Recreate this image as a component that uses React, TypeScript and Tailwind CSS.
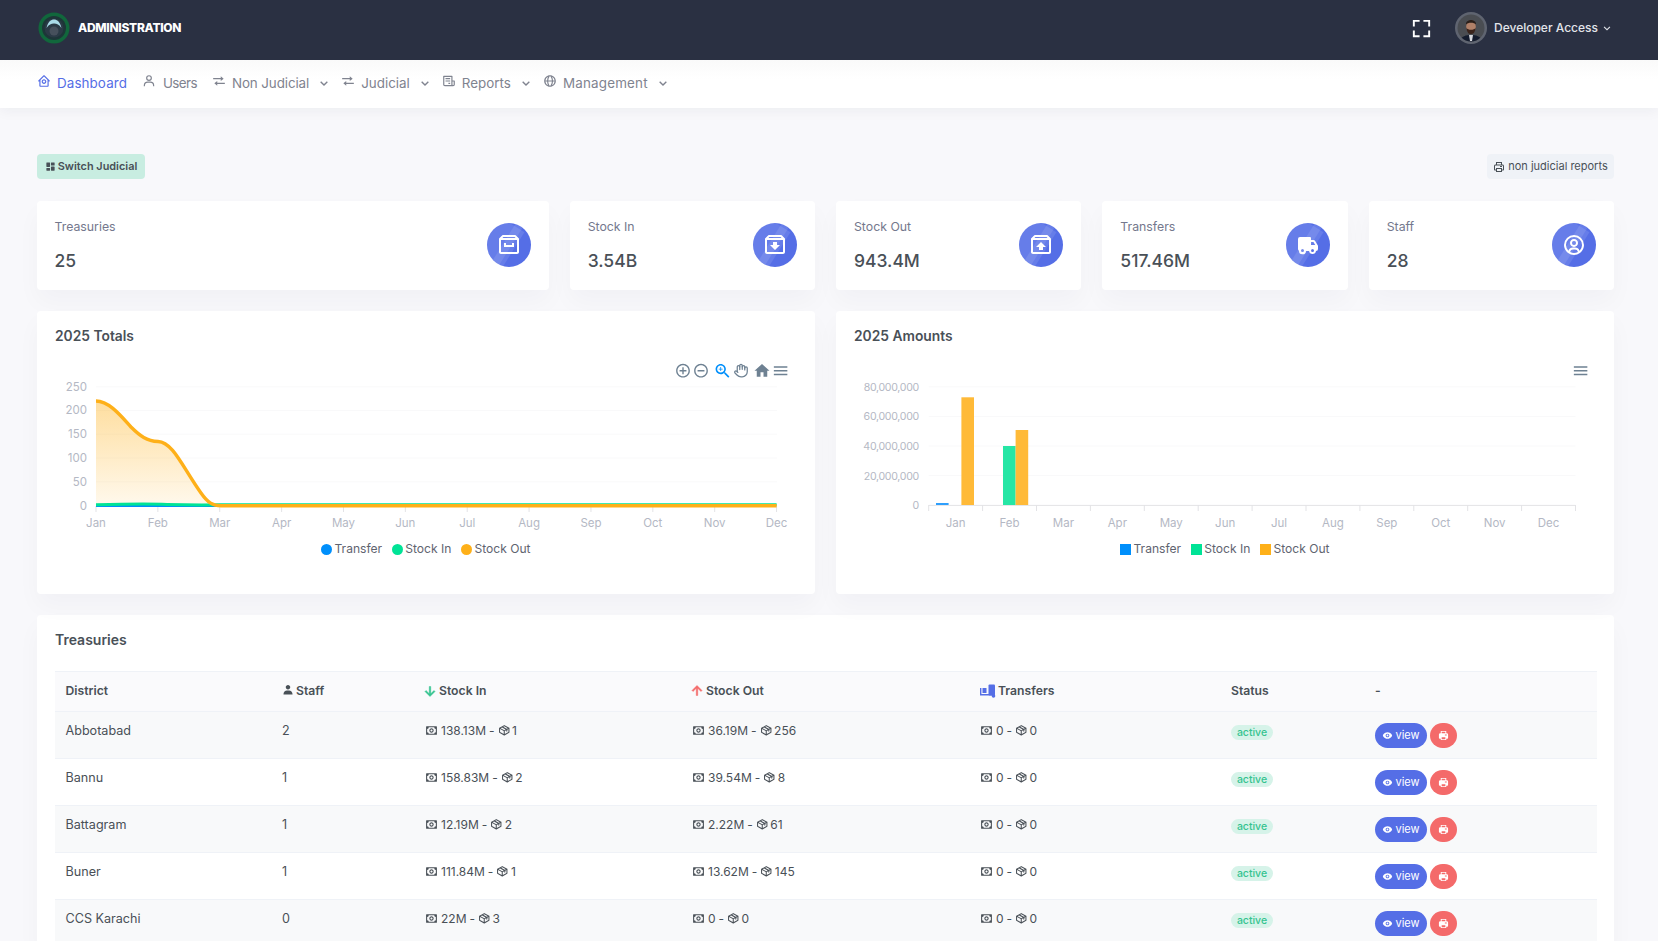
import React from "react";
import {
  BiHomeCircle, BiUser, BiTransfer, BiReceipt, BiGlobe, BiChevronDown, BiFullscreen,
  BiArchive, BiArchiveIn, BiArchiveOut, BiSolidTruck, BiUserCircle, BiPrinter, BiMoney,
  BiPackage, BiSolidShow, BiSolidPrinter, BiSolidDashboard, BiSolidUser, BiDownArrowAlt, BiUpArrowAlt,
} from "react-icons/bi";

const months = ["Jan", "Feb", "Mar", "Apr", "May", "Jun", "Jul", "Aug", "Sep", "Oct", "Nov", "Dec"];

function Logo() {
  return (
    <svg width="32" height="32" viewBox="0 0 32 32" className="shrink-0">
      <circle cx="16" cy="16" r="15.5" fill="#11673c" />
      <circle cx="16" cy="16" r="12" fill="#1d3638" />
      <circle cx="16" cy="16" r="9.5" fill="#2b3a46" />
      <path d="M8.5 16 C10 9.5 13 7.5 16 7.5 C19 7.5 22 9.5 23.5 16 C21 12.5 19 11.5 16 11.5 C13 11.5 11 12.5 8.5 16Z" fill="#a9dbe8" />
      <circle cx="16" cy="19" r="4.5" fill="#46505c" />
    </svg>
  );
}

function Avatar() {
  return (
    <svg width="32" height="32" viewBox="0 0 32 32" className="shrink-0">
      <circle cx="16" cy="16" r="16" fill="#5f6470" />
      <circle cx="16" cy="16" r="13.5" fill="#4a4d52" />
      <clipPath id="av"><circle cx="16" cy="16" r="13.5" /></clipPath>
      <g clipPath="url(#av)">
        <path d="M4 32 C5 24 11 23 16 23 C21 23 27 24 28 32Z" fill="#141c2e" />
        <path d="M14 23 L18 23 L17 29 L15 29Z" fill="#d5d7dc" />
        <ellipse cx="16" cy="14.5" rx="4.8" ry="6.4" fill="#b08068" />
        <path d="M11.4 16 C12 21 14 22 16 22 C18 22 20 21 20.6 16 C19 18.4 13 18.4 11.4 16Z" fill="#3a241c" />
        <path d="M11 12.5 C10.5 6.5 21.5 6.5 21 12.5 C19 10.2 13 10.2 11 12.5Z" fill="#2a1f1a" />
      </g>
    </svg>
  );
}

function NavItem({ icon, label, active, chevron, tone, gap }: { icon: React.ReactNode; label: string; active?: boolean; chevron?: boolean; tone?: string; gap?: string }) {
  return (
    <div className={active ? "flex items-center text-[#556ee6]" : "flex items-center text-[#7f838f]"}>
      <span className="-translate-y-0.5">{icon}</span>
      <span className={(gap ?? "ml-[6px]") + " text-[13.4px] leading-5 " + (tone ?? "")}>{label}</span>
      {chevron && <BiChevronDown size={16} className="ml-[7px] -mr-[6px]" />}
    </div>
  );
}

function Stat({ label, value, icon, wide }: { label: string; value: string; icon: React.ReactNode; wide?: boolean }) {
  return (
    <div className={(wide ? "col-span-2 pl-[17.5px] " : "pl-[18px] ") + "flex h-[89px] justify-between rounded bg-white pr-[18px] shadow-[0_12px_24px_rgba(18,38,63,0.03)]"}>
      <div className="pt-4">
        <div className="h-5 text-[12.3px] leading-5 text-[#74788d]">{label}</div>
        <div className="mt-3 h-6 text-[17.5px] font-medium leading-6 text-[#495057]">{value}</div>
      </div>
      <div className="relative mt-[22px] flex h-11 w-11 items-center justify-center overflow-hidden rounded-full bg-[#556ee6] text-white">
        <span className="absolute -top-[5px] left-[16px] h-[54px] w-2 rotate-[32deg] bg-white/10" />
        <span className="absolute -top-[5px] -left-3 h-[54px] w-[38px] rotate-[32deg] bg-white/10" />
        {icon}
      </div>
    </div>
  );
}

function Legend({ square }: { square?: boolean }) {
  const items = [
    { label: "Transfer", color: "bg-[#008ffb]" },
    { label: "Stock In", color: "bg-[#00e396]" },
    { label: "Stock Out", color: "bg-[#feb019]" },
  ];
  return (
    <div className="flex h-[18px] items-center justify-center gap-[10px]">
      {items.map((i) => (
        <div key={i.label} className="flex items-center gap-[2px]">
          <span className={i.color + " h-[11px] w-[11px] " + (square ? "" : "rounded-full")} />
          <span className="text-[12.1px] leading-[18px] text-[#5f6470]">{i.label}</span>
        </div>
      ))}
    </div>
  );
}

function Toolbar({ x, y, d, fill = "#6e8192", size = 20 }: { x: number; y: number; d: string; fill?: string; size?: number }) {
  return (
    <svg x={x - size / 2} y={y - size / 2} width={size} height={size} viewBox="0 0 24 24" fill={fill}>
      <path d={d} />
    </svg>
  );
}

const MENU = "M3 18h18v-2H3v2zm0-5h18v-2H3v2zm0-7v2h18V6H3z";

function AreaChart() {
  const xs = months.map((_, i) => 59 + i * 61.87);
  const ys = [145.6, 121.8, 98, 74.2, 50.4, 26.8];
  const curve = "M59 41 C72 41 84 56 94 67 C103 76 110 81 121 81.5 C136 82 146 108 164 133 C171 143 176 145.8 184 145.8 L739.6 145.8";
  return (
    <svg width="778" height="180" className="block">
      <defs>
        <linearGradient id="areaFill" x1="0" y1="0" x2="0" y2="1">
          <stop offset="0" stopColor="#feb019" stopOpacity="0.42" />
          <stop offset="1" stopColor="#feb019" stopOpacity="0.08" />
        </linearGradient>
      </defs>
      {ys.map((y, i) => (
        <g key={y}>
          <line x1="59" x2="740" y1={y} y2={y} stroke="#f9f9fa" />
          <text x="50" y={y + 4} textAnchor="end" fontSize="11.5" fill="#b4b8c4">{i * 50}</text>
        </g>
      ))}
      {xs.map((x, i) => (
        <g key={i}>
          <line x1={x} x2={x} y1="146" y2="152" stroke="#e3e3e6" />
          <text x={x} y="167" textAnchor="middle" fontSize="11.5" fill="#b4b8c4">{months[i]}</text>
        </g>
      ))}
      <path d={curve + " L59 145.5Z"} fill="url(#areaFill)" />
      <path d="M59 145.5 L184 145.5" stroke="#008ffb" strokeWidth="3" fill="none" />
      <path d="M59 144.8 C90 144 110 143.6 130 144.5 C150 145 170 145 184 144.8 L739.6 144.8" stroke="#00e396" strokeWidth="3" fill="none" />
      <path d={curve} stroke="#feb019" strokeWidth="3.4" fill="none" />
      <Toolbar x={646} y={10.7} size={16.5} d="M13 7h-2v4H7v2h4v4h2v-4h4v-2h-4V7zm-1-5C6.48 2 2 6.48 2 12s4.48 10 10 10 10-4.48 10-10S17.52 2 12 2zm0 18c-4.41 0-8-3.59-8-8s3.59-8 8-8 8 3.59 8 8-3.59 8-8 8z" />
      <Toolbar x={664} y={10.7} size={16.5} d="M7 11v2h10v-2H7zm5-9C6.48 2 2 6.48 2 12s4.48 10 10 10 10-4.48 10-10S17.52 2 12 2zm0 18c-4.41 0-8-3.59-8-8s3.59-8 8-8 8 3.59 8 8-3.59 8-8 8z" />
      <Toolbar x={685.7} y={11} fill="#008ffb" size={19} d="M15.5 14h-.79l-.28-.27C15.41 12.59 16 11.11 16 9.5 16 5.91 13.09 3 9.5 3S3 5.91 3 9.5 5.91 16 9.5 16c1.61 0 3.09-.59 4.23-1.57l.27.28v.79l5 4.99L20.49 19l-4.99-5zm-6 0C7.01 14 5 11.99 5 9.5S7.01 5 9.5 5 14 7.01 14 9.5 11.99 14 9.5 14zM12 10h-2v2H9v-2H7V9h2V7h1v2h2v1z" />
      <svg x={696.5} y={3} width="15" height="15" viewBox="0 0 24 24" fill="none" stroke="#6e8192" strokeWidth="2" strokeLinecap="round" strokeLinejoin="round">
        <path d="M18 11V6a2 2 0 0 0-4 0" /><path d="M14 10V4a2 2 0 0 0-4 0v2" /><path d="M10 10.5V6a2 2 0 0 0-4 0v8" /><path d="M18 8a2 2 0 1 1 4 0v6a8 8 0 0 1-8 8h-2c-2.8 0-4.5-.86-5.99-2.34l-3.6-3.6a2 2 0 0 1 2.83-2.82L7 15" />
      </svg>
      <Toolbar x={725} y={10.7} size={18} d="M10 20v-6h4v6h5v-8h3L12 3 2 12h3v8z" />
      <Toolbar x={743.6} y={10.7} size={18} d={MENU} />
    </svg>
  );
}

function BarChart() {
  const x0 = 92.7;
  const band = 53.9;
  const yl = ["0", "20,000,000", "40,000,000", "60,000,000", "80,000,000"];
  const gy = [145.4, 115.5, 86, 56.4, 26.8];
  return (
    <svg width="778" height="180" className="block">
      {gy.map((y, i) => (
        <g key={y}>
          <line x1={x0} x2={x0 + band * 12} y1={y} y2={y} stroke={i === 0 ? "#e3e3e6" : "#f9f9fa"} />
          <text x="83" y={y + 4} textAnchor="end" fontSize="10.6" letterSpacing="-0.3" fill="#b4b8c4">{yl[i]}</text>
        </g>
      ))}
      {Array.from({ length: 13 }).map((_, i) => (
        <line key={i} x1={x0 + i * band} x2={x0 + i * band} y1="145" y2="151" stroke="#e3e3e6" />
      ))}
      {months.map((m, i) => (
        <text key={m} x={x0 + band * (i + 0.5)} y="167" textAnchor="middle" fontSize="11.5" fill="#b4b8c4">{m}</text>
      ))}
      <rect x="100" y="143" width="12.6" height="2" fill="#2f9ffc" />
      <rect x="125.4" y="37.3" width="12.6" height="107.7" fill="#ffba38" />
      <rect x="167" y="86" width="12.6" height="59" fill="#26e6a5" />
      <rect x="179.6" y="70" width="12.6" height="75" fill="#ffba38" />
      <Toolbar x={744.6} y={10.7} size={18} d={MENU} />
    </svg>
  );
}

function Card({ title, children }: { title: string; children: React.ReactNode }) {
  return (
    <div className="h-[283px] rounded bg-white pt-[15px] shadow-[0_12px_24px_rgba(18,38,63,0.03)]">
      <h4 className="ml-[18px] mb-[14px] h-5 text-[13.8px] font-semibold leading-5 text-[#495057]">{title}</h4>
      {children}
    </div>
  );
}

function Amount({ money, items }: { money: string; items: string }) {
  return (
    <span className="flex items-center text-[12px] leading-5 text-[#495057]">
      <BiMoney size={13} className="mr-[3px] -translate-y-px" />
      {money}
      <span className="mx-[3px]">-</span>
      <BiPackage size={12.5} className="mr-[2px] -translate-y-px" />
      {items}
    </span>
  );
}

function Forklift() {
  return (
    <svg width="17" height="14" viewBox="0 0 17 14" fill="#556ee6">
      <rect x="2.5" y="4" width="4" height="5" />
      <rect x="8.5" y="0.5" width="6.5" height="11" rx="1" />
      <path d="M0 10 H12 V11.5 H0Z" />
      <path d="M0 4 H1.4 V11 H0Z" />
      <circle cx="13.5" cy="12" r="1.8" />
    </svg>
  );
}

const rows = [
  ["Abbotabad", "2", "138.13M", "1", "36.19M", "256"],
  ["Bannu", "1", "158.83M", "2", "39.54M", "8"],
  ["Battagram", "1", "12.19M", "2", "2.22M", "61"],
  ["Buner", "1", "111.84M", "1", "13.62M", "145"],
  ["CCS Karachi", "0", "22M", "3", "0", "0"],
];

export default function App() {
  return (
    <div className="flex h-screen flex-col overflow-hidden bg-[#f8f8fb] font-['Inter','Liberation_Sans',sans-serif]">
      <header className="relative z-20 flex h-[60px] shrink-0 items-center justify-between bg-[#2a3042] pb-[4px] pl-[38px] pr-[44px]">
        <div className="flex items-center">
          <Logo />
          <span className="ml-[8px] text-[12px] font-extrabold tracking-[-0.3px] text-white">ADMINISTRATION</span>
        </div>
        <div className="flex items-center">
          <BiFullscreen size={23} className="text-white" />
          <div className="ml-[22px]"><Avatar /></div>
          <span className="ml-[7px] text-[12px] font-medium text-[#e2e5ea]">Developer Access</span>
          <BiChevronDown size={14} className="ml-[2px] text-[#e2e5ea]" />
        </div>
      </header>

      <nav className="relative z-10 flex h-12 shrink-0 items-center gap-[15px] bg-gradient-to-b from-[#fafafa] to-white to-40% pb-[3px] pl-[37px] shadow-[0_3px_12px_rgba(18,38,63,0.05)]">
        <NavItem active icon={<BiHomeCircle size={14} />} label="Dashboard" tone="tracking-[0.1px]" />
        <NavItem icon={<BiUser size={14} />} label="Users" gap="ml-[7px]" tone="tracking-[-0.6px]" />
        <NavItem icon={<BiTransfer size={14} />} label="Non Judicial" tone="tracking-[-0.1px]" chevron />
        <NavItem icon={<BiTransfer size={14} />} label="Judicial" chevron />
        <NavItem icon={<BiReceipt size={14} />} label="Reports" chevron />
        <NavItem icon={<BiGlobe size={14} />} label="Management" tone="tracking-[0.2px]" chevron />
      </nav>

      <main className="flex-1 pl-[37px] pr-[44px] pt-[46px]">
        <div className="flex h-[25px] justify-between">
          <button className="flex w-[108px] items-center justify-center gap-[2px] rounded bg-[#c8ede1] text-[10.9px] font-semibold text-[#495057]">
            <BiSolidDashboard size={11} />
            Switch Judicial
          </button>
          <button className="flex w-[127px] items-center justify-center gap-[3px] rounded bg-[#eff2f7] text-[11px] text-[#495057]">
            <BiPrinter size={12} />
            non judicial reports
          </button>
        </div>

        <div className="mt-[22px] grid grid-cols-6 gap-x-[21px]">
          <Stat wide label="Treasuries" value="25" icon={<BiArchive size={24} className="relative" />} />
          <Stat label="Stock In" value="3.54B" icon={<BiArchiveIn size={24} className="relative" />} />
          <Stat label="Stock Out" value="943.4M" icon={<BiArchiveOut size={24} className="relative" />} />
          <Stat label="Transfers" value="517.46M" icon={<BiSolidTruck size={24} className="relative" />} />
          <Stat label="Staff" value="28" icon={<BiUserCircle size={24} className="relative" />} />
        </div>

        <div className="mt-[21px] grid grid-cols-2 gap-x-[21px]">
          <Card title="2025 Totals">
            <AreaChart />
            <Legend />
          </Card>
          <Card title="2025 Amounts">
            <BarChart />
            <Legend square />
          </Card>
        </div>

        <div className="mt-[21px] rounded bg-white pl-[18px] pr-[17px] pt-[15px] shadow-[0_12px_24px_rgba(18,38,63,0.03)]">
          <h4 className="mb-[21px] h-5 text-[14px] font-semibold leading-5 text-[#495057]">Treasuries</h4>
          <table className="w-full table-fixed border-collapse text-left text-[12.6px] text-[#495057]">
            <colgroup>
              <col className="w-[217px]" />
              <col className="w-[143px]" />
              <col className="w-[267px]" />
              <col className="w-[288px]" />
              <col className="w-[251px]" />
              <col className="w-[144px]" />
              <col />
            </colgroup>
            <thead>
              <tr className="h-10 border-y border-[#eff2f7] bg-[#fafafc] text-[12.2px] font-semibold">
                <th className="pl-[10.5px] font-semibold">District</th>
                <th className="pl-[10px] font-semibold"><span className="flex items-center gap-[2px]"><BiSolidUser size={12} className="-translate-y-px" />Staff</span></th>
                <th className="pl-[10px] font-semibold"><span className="-ml-[4px] flex items-center"><BiDownArrowAlt size={18} className="stroke-current stroke-[0.6] text-[#34c38f]" />Stock In</span></th>
                <th className="pl-[10px] font-semibold"><span className="-ml-[4px] flex items-center"><BiUpArrowAlt size={18} className="stroke-current stroke-[0.6] text-[#f46a6a]" />Stock Out</span></th>
                <th className="pl-[10px] font-semibold"><span className="flex items-center gap-[1px]"><Forklift />Transfers</span></th>
                <th className="pl-[10px] font-semibold">Status</th>
                <th className="pl-[10px] font-semibold">-</th>
              </tr>
            </thead>
            <tbody>
              {rows.map((r, i) => (
                <tr key={r[0]} className={(i % 2 === 0 ? "bg-[#f8f9fa] " : "bg-white ") + "h-[47px] border-b border-[#eff2f7]"}>
                  <td className="pl-[10.5px] pt-[9px] align-top leading-5">{r[0]}</td>
                  <td className="pl-[10px] pt-[9px] align-top leading-5">{r[1]}</td>
                  <td className="pl-[10px] pt-[9px] align-top"><Amount money={r[2]} items={r[3]} /></td>
                  <td className="pl-[10px] pt-[9px] align-top"><Amount money={r[4]} items={r[5]} /></td>
                  <td className="pl-[10px] pt-[9px] align-top"><Amount money="0" items="0" /></td>
                  <td className="pl-[10px] pt-[13px] align-top">
                    <span className="flex h-[15px] w-[42px] items-center justify-center rounded-full bg-[#d6f3e9] text-[10.5px] font-medium text-[#34c38f]">active</span>
                  </td>
                  <td className="pl-[10px] pt-[11px] align-top">
                    <div className="flex gap-[3px]">
                      <button className="flex h-[25px] w-[52px] items-center justify-center gap-[2px] rounded-full bg-[#556ee6] text-[11px] text-white"><BiSolidShow size={11} />view</button>
                      <button className="flex h-[25px] w-[27px] items-center justify-center rounded-full bg-[#f46a6a] text-white"><BiSolidPrinter size={11} /></button>
                    </div>
                  </td>
                </tr>
              ))}
            </tbody>
          </table>
        </div>
      </main>
    </div>
  );
}
